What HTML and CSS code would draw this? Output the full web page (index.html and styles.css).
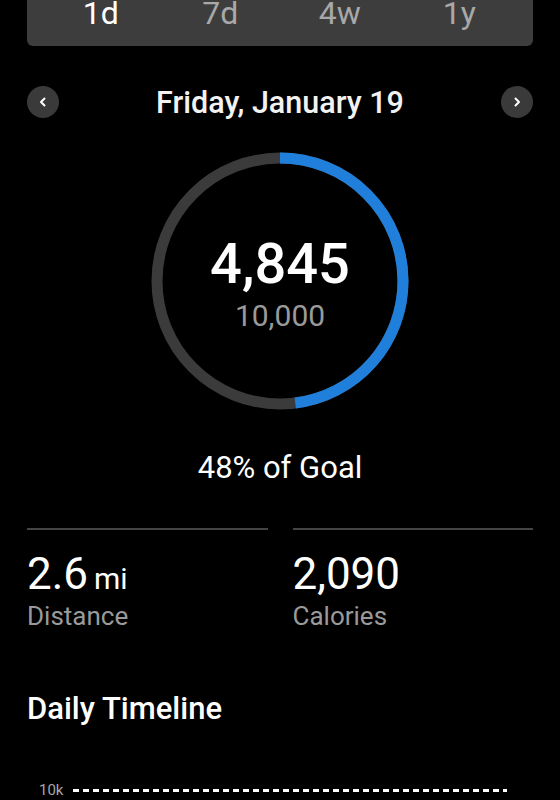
FILE: index.html
```html
<!DOCTYPE html>
<html lang="en">
<head>
    <meta charset="UTF-8">
    <meta name="viewport" content="width=device-width, initial-scale=1.0">
    <title>Steps</title>
    <link rel="stylesheet" href="styles.css">
</head>
<body>
    <div class="page">
        <ul class="range-tabs">
            <li class="active">1d</li>
            <li>7d</li>
            <li>4w</li>
            <li>1y</li>
        </ul>

        <div class="date-row">
            <button class="round-btn" aria-label="Previous day">
                <svg width="12" height="12" viewBox="0 0 12 12"><path d="M7.5 2.5 L4 6 L7.5 9.5" fill="none" stroke="#fff" stroke-width="2" stroke-linecap="round" stroke-linejoin="round"/></svg>
            </button>
            <h1 class="date-title">Friday, January 19</h1>
            <button class="round-btn" aria-label="Next day">
                <svg width="12" height="12" viewBox="0 0 12 12"><path d="M4.5 2.5 L8 6 L4.5 9.5" fill="none" stroke="#fff" stroke-width="2" stroke-linecap="round" stroke-linejoin="round"/></svg>
            </button>
        </div>

        <div class="ring">
            <svg class="ring-svg" width="258" height="258" viewBox="0 0 258 258">
                <circle cx="129" cy="129" r="123" fill="none" stroke="#3b3b3b" stroke-width="11"/>
                <!-- 48% of 2*pi*123 = 370.9 of 772.8 -->
                <circle cx="129" cy="129" r="123" fill="none" stroke="#1f7fdb" stroke-width="11"
                        stroke-dasharray="370.9 772.8" transform="rotate(-90 129 129)"/>
            </svg>
            <div class="ring-text">
                <div class="steps">4,845</div>
                <div class="goal">10,000</div>
            </div>
        </div>

        <p class="goal-pct">48% of Goal</p>

        <div class="stats">
            <div class="stat">
                <div class="stat-value">2.6<span class="unit">mi</span></div>
                <div class="stat-label">Distance</div>
            </div>
            <div class="stat">
                <div class="stat-value">2,090</div>
                <div class="stat-label">Calories</div>
            </div>
        </div>

        <h2 class="section-title">Daily Timeline</h2>

        <div class="chart">
            <span class="axis-label">10k</span>
            <div class="goal-line"></div>
        </div>
    </div>
</body>
</html>
```

FILE: styles.css
```css
body {
    margin: 0;
    background-color: #000;
    color: #fff;
    font-family: Roboto, "Noto Sans", sans-serif;
}

.page {
    padding: 0 27px;
}

.range-tabs {
    display: flex;
    list-style: none;
    margin: 0;
    padding: 1px 14px 21px;
    height: 24px;
    background-color: #3d3d3d;
    border-radius: 0 0 6px 6px;
}

.range-tabs li {
    flex: 1;
    text-align: center;
    font-size: 32px;
    line-height: 24px;
    color: #a8a8a8;
}

.range-tabs li.active {
    color: #fff;
}

.date-row {
    display: flex;
    align-items: center;
    justify-content: space-between;
    margin-top: 40px;
    height: 32px;
}

.round-btn {
    width: 32px;
    height: 32px;
    border: none;
    border-radius: 50%;
    background-color: #3a3a3a;
    padding: 0;
    display: flex;
    align-items: center;
    justify-content: center;
}

.date-title {
    margin: 0;
    font-size: 30.5px;
    font-weight: 500;
    color: #f2f2f2;
}

.ring {
    display: grid;
    justify-items: center;
    align-items: center;
    margin-top: 34px;
}

.ring-svg,
.ring-text {
    grid-area: 1 / 1;
}

.ring-text {
    text-align: center;
    padding-top: 6px;
}

.steps {
    font-size: 56px;
    font-weight: 500;
    line-height: 60px;
}

.goal {
    font-size: 30px;
    color: #9a9a9a;
    line-height: 36px;
    margin-top: 4px;
}

.goal-pct {
    margin: 40px 0 0;
    text-align: center;
    font-size: 31px;
    line-height: 36px;
}

.stats {
    display: flex;
    gap: 25px;
    margin-top: 42px;
}

.stat {
    flex: 1;
    border-top: 2px solid #444;
    padding-top: 20px;
}

.stat-value {
    font-size: 44px;
    line-height: 48px;
}

.unit {
    font-size: 30px;
    line-height: 1;
    margin-left: 6px;
}

.stat-label {
    font-size: 26px;
    line-height: 32px;
    margin-top: 2px;
    color: #9a9a9a;
}

.section-title {
    margin: 58px 0 0;
    font-size: 31px;
    font-weight: 500;
    line-height: 38px;
}

.chart {
    display: flex;
    align-items: center;
    margin-top: 53px;
    padding-left: 12px;
}

.axis-label {
    font-size: 15px;
    color: #a8a8a8;
    width: 34px;
}

.goal-line {
    flex: 1;
    height: 3px;
    margin-right: 26px;
    background: repeating-linear-gradient(90deg, #fff 0 6px, transparent 6px 10px);
}
```
